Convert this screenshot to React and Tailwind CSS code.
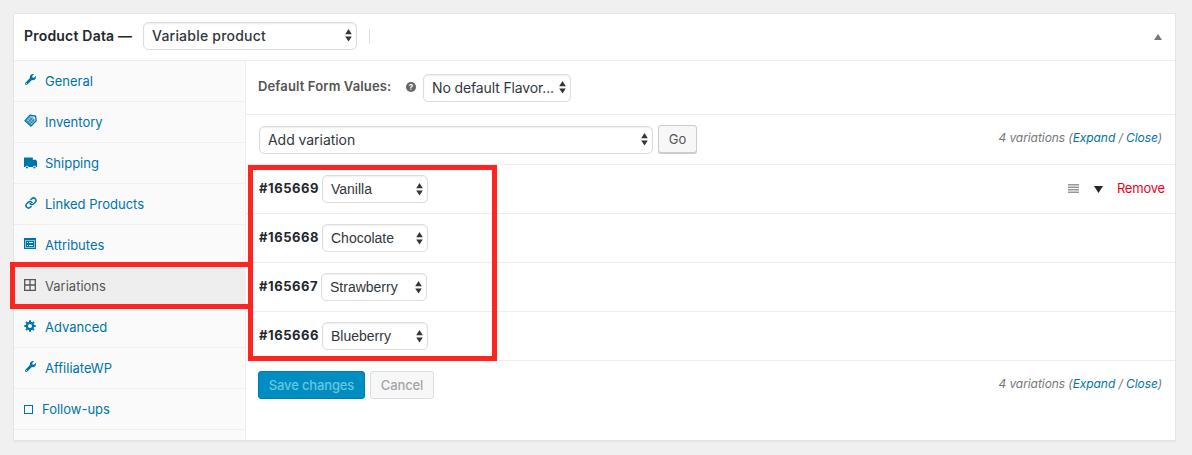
import React from 'react';
import { FaWrench } from 'react-icons/fa';
import { Link } from 'lucide-react';

const TagIcon = () => (
  <svg viewBox="0 0 13 13" className="w-[13px] h-[13px]" fill="none">
    <path d="M1 6.6 6 1.1l5.6 1 .6 4.7-5.3 5.3z" fill="#8fc0da" stroke="#0073aa" strokeWidth="1.2" />
    <path d="M2.5 6.2 7 10.7M4 4.7l4.4 4.4M5.5 3.2l4.2 4.4M4 8.6l5-5.4M5.5 10.4l5-5.4" stroke="#0073aa" strokeWidth=".7" />
    <path d="M8.4 3 10.4 3.4l.4 2" stroke="#fafafa" strokeWidth=".9" />
  </svg>
);

const TruckIcon = () => (
  <svg viewBox="0 0 13 12" className="w-[13px] h-[12px] translate-y-px" fill="#0073aa">
    <path d="M0 .5h8.8v2.3H12l1 1.6V10h-.9a1.7 1.7 0 0 0-3.3 0H4.6a1.7 1.7 0 0 0-3.3 0H0z" />
    <circle cx="3" cy="10.6" r="1" />
    <circle cx="10.4" cy="10.6" r="1" />
  </svg>
);

const FormIcon = () => (
  <svg viewBox="0 0 12 11" className="w-[12px] h-[11px]" shapeRendering="crispEdges">
    <path fill="#0073aa" d="M0 0h12v11H0z" />
    <path fill="#8fc0da" d="M1 2h10v1H1zM1 3h1v7H1zM10 3h1v7h-1zM1 9h10v1H1z" />
    <path fill="#fafafa" d="M3 4h1v1H3zM3 7h1v1H3zM5 4h4v1H5zM5 7h4v1H5z" />
  </svg>
);

const GridIcon = () => (
  <svg viewBox="0 0 12 12" className="w-[12px] h-[12px]" fill="none" stroke="#555" strokeWidth="1.3">
    <path d="M.7.7h10.6v10.6H.7zM6 .7v10.6M.7 6h10.6" />
  </svg>
);

const GearIcon = () => (
  <svg viewBox="0 0 12 12" className="w-[12px] h-[12px]" fill="none" stroke="#0073aa">
    <circle cx="6" cy="6" r="3.1" strokeWidth="2.2" />
    <path d="M6 .3v2M6 9.7v2M.3 6h2M9.7 6h2M2 2l1.3 1.3M8.7 8.7 10 10M10 2 8.7 3.3M3.3 8.7 2 10" strokeWidth="2" />
  </svg>
);

const tabs = [
  { label: 'General', icon: <FaWrench className="w-[11px] h-[11px] ml-px" /> },
  { label: 'Inventory', icon: <TagIcon /> },
  { label: 'Shipping', icon: <TruckIcon /> },
  { label: 'Linked Products', icon: <Link className="w-[12px] h-[12px] ml-px" strokeWidth={3} /> },
  { label: 'Attributes', icon: <FormIcon /> },
  { label: 'Variations', icon: <GridIcon />, active: true },
  { label: 'Advanced', icon: <GearIcon /> },
  { label: 'AffiliateWP', icon: <FaWrench className="w-[11px] h-[11px] ml-px" /> },
  { label: 'Follow-ups', icon: <span className="block w-[9px] h-[9px] mt-1 border border-[#0073aa]" />, narrow: true },
];

const variations = [
  { id: '#165669', flavor: 'Vanilla', tools: true },
  { id: '#165668', flavor: 'Chocolate' },
  { id: '#165667', flavor: 'Strawberry', gap: 'ml-[2px]' },
  { id: '#165666', flavor: 'Blueberry' },
];

function Select({ children, className = '' }) {
  return (
    <button className={`flex h-7 items-center justify-between rounded-[5px] border border-[#ddd] bg-white pl-2 pr-1 text-[14px] text-[#32373c] shadow-[inset_0_1px_2px_rgba(0,0,0,0.07)] ${className}`}>
      <span className="whitespace-nowrap">{children}</span>
      <svg viewBox="0 0 7 13" className="h-[13px] w-[7px] shrink-0" fill="#32373c">
        <path d="M3.5 0 6.8 5.2H.2zM3.5 12.6.2 7.4h6.6z" />
      </svg>
    </button>
  );
}

function Pagination() {
  return (
    <div className="mb-1 text-[12px] italic tracking-[-0.07px] text-[#777] whitespace-nowrap">
      4 variations (<a className="text-[#0073aa]">Expand</a> / <a className="text-[#0073aa]">Close</a>)
    </div>
  );
}

export default function App() {
  return (
    <div className="relative h-[455px] w-[1192px] overflow-hidden bg-[#f0f0f0] px-[13px] pt-[13px] font-['Inter','Liberation_Sans',sans-serif] text-[13px] text-[#23282d]">
      <div className="flex h-[428px] w-[1163px] flex-col border border-[#e5e5e5] bg-white shadow-[0_1px_1px_rgba(0,0,0,0.04)]">
        {/* Header */}
        <div className="flex h-[47px] shrink-0 items-center border-b border-[#eee] pb-[2px] pl-[10px] pr-[13px]">
          <h2 className="mb-[2px] w-[119px] whitespace-nowrap text-[14px] font-semibold tracking-[0.2px]">Product Data —</h2>
          <Select className="w-[214px] pb-px font-medium tracking-[0.22px]">Variable product</Select>
          <span className="ml-3 h-[15px] w-px bg-[#ddd]" />
          <svg viewBox="0 0 8 6" className="ml-auto mt-px h-[6px] w-[8px]" fill="#72777c">
            <path d="M4 0 8 6H0z" />
          </svg>
        </div>

        <div className="flex min-h-0 flex-1">
          {/* Tabs */}
          <ul className="w-[232px] shrink-0 border-r border-[#eee] bg-[#fafafa]">
            {tabs.map((tab) => (
              <li
                key={tab.label}
                className={`flex h-[41px] items-center border-b border-[#eee] pl-[10px] ${tab.active ? 'bg-[#eee] text-[#555]' : 'text-[#0073aa]'}`}
              >
                <span className={`mb-[3px] shrink-0 ${tab.narrow ? 'w-[18px]' : 'w-[21px]'}`}>{tab.icon}</span>
                <span className="mt-[2px]">{tab.label}</span>
              </li>
            ))}
          </ul>

          {/* Variations panel */}
          <div className="flex-1">
            <div className="flex h-[54px] items-center border-b border-[#eee] pl-3">
              <span className="mb-[2px] w-[148px] whitespace-nowrap text-[13px] font-semibold tracking-[0.13px] text-[#555]">Default Form Values:</span>
              <span className="mr-[7px] mb-px flex h-[10px] w-[10px] items-center justify-center rounded-full bg-[#666] text-[8px] font-bold text-white">?</span>
              <Select className="w-[148px] tracking-[-0.13px]">No default Flavor...</Select>
            </div>

            <div className="flex h-[50px] items-center border-b border-[#eee] pl-[13px] pr-[13px]">
              <Select className="w-[394px] tracking-[-0.05px]">Add variation</Select>
              <button className="mb-px ml-[5px] h-7 w-[39px] rounded-[3px] border border-[#ccc] bg-[#f7f7f7] pt-[2px] text-[13px] text-[#555] shadow-[0_1px_0_#ccc]">Go</button>
              <div className="ml-auto"><Pagination /></div>
            </div>

            {variations.map((v) => (
              <div key={v.id} className="flex h-[49px] items-center border-b border-[#eee] pl-[13px] pr-[10px]">
                <strong className="w-[60px] font-bold tracking-[0.55px]">{v.id}</strong>
                <Select className={`w-[106px] font-['Liberation_Sans',sans-serif] ${v.gap || 'ml-[3px]'}`}>{v.flavor}</Select>
                {v.tools && (
                  <div className="ml-auto flex items-center">
                    <svg viewBox="0 0 11 9" className="mb-px mr-[15px] h-[9px] w-[11px]" fill="#999">
                      <path d="M0 0h11v1.5H0zM0 2.5h11v1.5H0zM0 5h11v1.5H0zM0 7.5h11v1.5H0z" />
                    </svg>
                    <svg viewBox="0 0 9 7" className="mr-[14px] h-[7px] w-[9px]" fill="#23282d">
                      <path d="M0 0h9L4.5 7z" />
                    </svg>
                    <a className="tracking-[-0.2px] text-[#f00020]">Remove</a>
                  </div>
                )}
              </div>
            ))}

            <div className="flex h-[49px] items-center pl-3 pr-[13px]">
              <button className="mb-[2px] h-7 w-[107px] rounded-[3px] border border-[#007cb2] bg-[#008ec2] pt-[2px] text-[13px] font-medium tracking-[-0.15px] text-[#66c6e4]">Save changes</button>
              <button className="mb-[2px] ml-[5px] h-7 w-16 rounded-[3px] border border-[#ddd] bg-[#f7f7f7] pt-[2px] text-[13px] font-medium tracking-[-0.1px] text-[#a0a5aa]">Cancel</button>
              <div className="ml-auto"><Pagination /></div>
            </div>
          </div>
        </div>
      </div>

      {/* Highlight frames */}
      <div className="pointer-events-none absolute left-[10px] top-[262px] h-[47px] w-[243px] border-[5px] border-[#ff2420]" />
      <div className="pointer-events-none absolute left-[248px] top-[165px] h-[196px] w-[249px] border-[5px] border-[#ff2420]" />
    </div>
  );
}
